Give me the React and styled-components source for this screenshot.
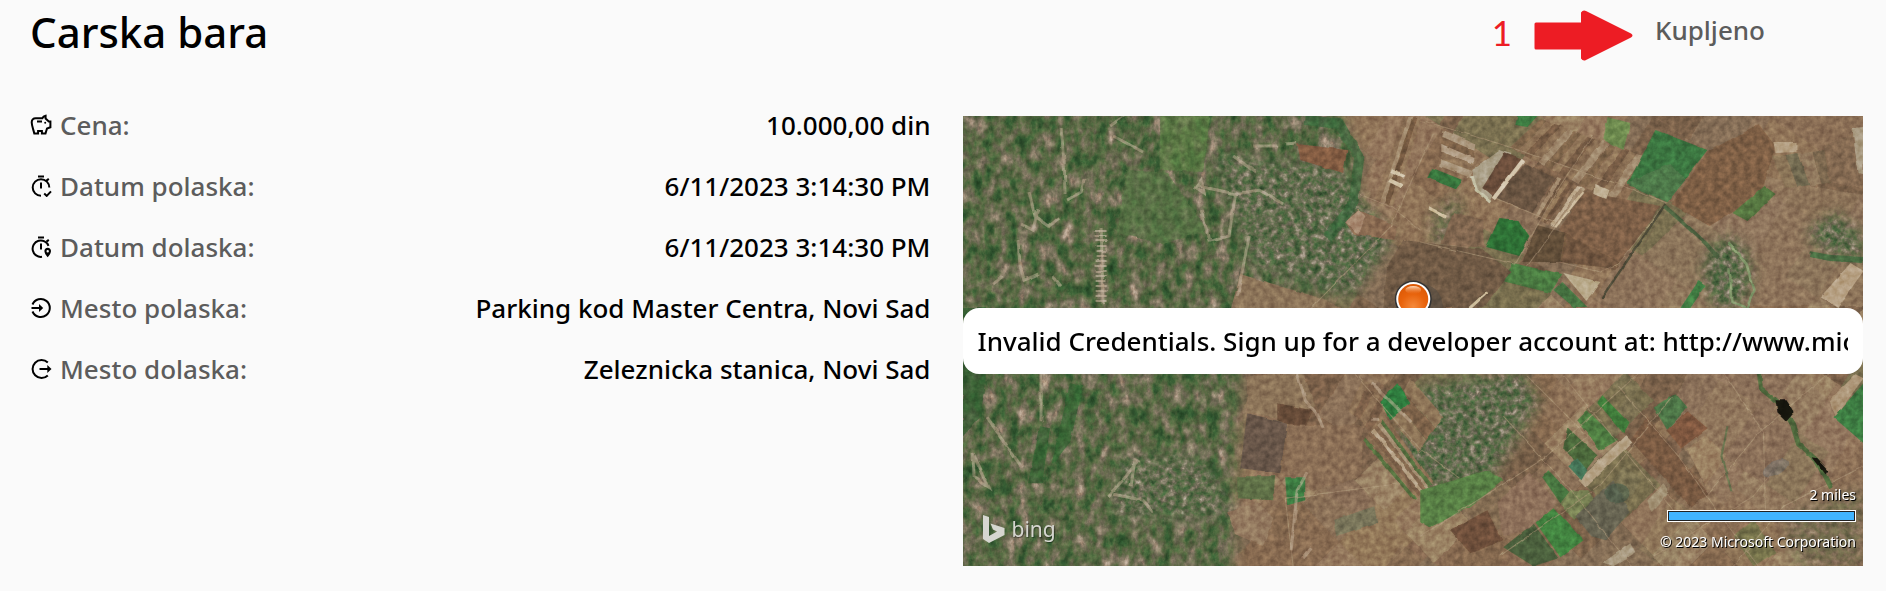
import React from 'react';
import styled, { createGlobalStyle } from 'styled-components';

const GlobalStyle = createGlobalStyle`
  *, *::before, *::after { box-sizing: border-box; }
  body {
    margin: 0;
    background: #fafafa;
    color: #000;
    font-family: 'Segoe UI', 'Noto Sans', 'Open Sans', sans-serif;
  }
`;

const Page = styled.main`
  display: grid;
  grid-template-columns: repeat(2, minmax(0, 1fr));
  column-gap: 32px;
  padding: 0 23px 24px 30px;
`;

const Header = styled.header`
  grid-column: 1 / -1;
  display: flex;
  justify-content: space-between;
  align-items: flex-start;
  height: 94px;
`;

const Title = styled.h1`
  margin: 0;
  font-size: 42px;
  font-weight: 500;
  line-height: 64px;
`;

const Status = styled.div`
  display: flex;
  align-items: center;
  gap: 22px;
  height: 60px;
  padding: 4px 98px 0 0;
`;

const StepNumber = styled.span`
  color: #ed1c24;
  font-family: Lato, sans-serif;
  font-size: 35px;
  line-height: 40px;
`;

const Arrow = styled.svg`
  width: 99px;
  height: 51px;
  margin-top: 6px;
`;

const StatusLabel = styled.span`
  color: #5c5c5c;
  font-size: 26px;
  font-weight: 500;
  line-height: 36px;
  margin-bottom: 4px;
`;

const Details = styled.dl`
  margin: 0;
`;

const DetailRow = styled.div`
  display: flex;
  align-items: center;
  justify-content: space-between;
  height: 61px;
  font-size: 26px;
  font-weight: 500;
  line-height: 36px;
`;

const DetailLabel = styled.dt`
  display: flex;
  align-items: center;
  gap: 8px;
  color: #5c5c5c;
`;

const DetailIcon = styled.svg`
  width: 22px;
  height: 22px;
  color: #000;
  fill: none;
  stroke: currentColor;
  stroke-width: 2;
`;

const DetailValue = styled.dd`
  margin: 0;
  text-align: right;
`;

const MapPanel = styled.section`
  display: grid;
  aspect-ratio: 2 / 1;
  margin-top: 22px;
  overflow: hidden;

  & > * {
    grid-area: 1 / 1;
    min-width: 0;
    min-height: 0;
  }
`;

const Terrain = styled.svg`
  display: block;
  width: 100%;
  height: 100%;
`;

const MapFooter = styled.div`
  position: relative;
  display: flex;
  justify-content: space-between;
  align-items: flex-end;
  padding: 0 7px 14px 20px;
`;

const Brand = styled.div`
  display: flex;
  align-items: center;
  gap: 7px;
  margin-bottom: 7px;
  color: #d6d6d0;
  font-size: 21px;
  line-height: 32px;
  text-shadow: 1px 1px 1px #0006;
`;

const BrandMark = styled.svg`
  width: 22px;
  height: 28px;
`;

const Legend = styled.div`
  display: flex;
  flex-direction: column;
  align-items: flex-end;
  color: #fff;
  font-size: 14px;
  line-height: 20px;
  text-shadow: 1px 1px 0 #000;
`;

const ScaleBar = styled.div`
  width: 189px;
  height: 12px;
  margin: 5px 0 10px;
  border: 1px solid #fff;
  background: #41b4ff;
  box-shadow: inset 0 0 0 1px #222;
`;

const Notice = styled.p`
  position: relative;
  align-self: center;
  margin: 0;
  padding: 15px;
  border-radius: 16px;
  background: #fff;
  font-size: 26px;
  font-weight: 500;
  line-height: 36px;
`;

const NoticeText = styled.span`
  display: block;
  overflow: hidden;
  white-space: nowrap;
`;

const icons = {
  savings: (
    <>
      <path d="M5.2 4.2C2.6 4.2 1.2 6 1.2 8.2c0 3.600 1.600 7 2.600 11.200h3.800v-2.300h3.800v2.300h3.600l1.500-4.900 3.400-1.300V7.600h-1.600l-3.200-3V1.700c-1.600.3-2.600 1.100-3.300 2.500Z" />
      <path d="M6.500 7.500h5" />
      <circle cx="14.700" cy="8.800" r="1" fill="currentColor" stroke="none" />
    </>
  ),
  timerCheck: (
    <>
      <path d="M7.500 1.600h6M10.500 7.500v6M10.500 20.800a8.300 8.300 0 1 1 8.300-8.300M16 5.600l2.300-1.700M13.700 18.500l2.500 2.400 4.300-4.500" />
    </>
  ),
  timerPin: (
    <>
      <path d="M7.500 1.600h6M10.500 7.500v6M16 5.600l2.300-1.700M18 9.800A8.200 8.200 0 1 0 11.500 20.800" />
      <path
        d="M17.200 11.700c-2 0-3.300 1.500-3.300 3.300 0 2.700 3.300 6.300 3.300 6.300s3.300-3.600 3.300-6.300c0-1.800-1.400-3.300-3.300-3.300Zm0 2.300a1.200 1.200 0 1 1 0 2.400 1.200 1.200 0 0 1 0-2.400Z"
        fill="currentColor" stroke="none" fillRule="evenodd"
      />
    </>
  ),
  enter: (
    <>
      <path d="M2 7.500a9 9 0 1 1 0 7M1 11h9" />
      <path d="M8.500 7l4.200 4-4.200 4Z" fill="currentColor" stroke="none" />
    </>
  ),
  exit: (
    <>
      <path d="M17.300 4.500a9 9 0 1 0 0 13M9 11h10" />
      <path d="M16.800 7l4.200 4-4.200 4Z" fill="currentColor" stroke="none" />
    </>
  ),
};

const details = [
  { icon: 'savings', label: 'Cena:', value: '10.000,00 din' },
  { icon: 'timerCheck', label: 'Datum polaska:', value: '6/11/2023 3:14:30 PM' },
  { icon: 'timerPin', label: 'Datum dolaska:', value: '6/11/2023 3:14:30 PM' },
  { icon: 'enter', label: 'Mesto polaska:', value: 'Parking kod Master Centra, Novi Sad' },
  { icon: 'exit', label: 'Mesto dolaska:', value: 'Zeleznicka stanica, Novi Sad' },
];

// Deterministic pseudo-random sequence, so that the terrain is the same on every render.
function sequence(seed) {
  let s = seed;
  return () => {
    s = (s * 16807) % 2147483647;
    return s / 2147483647;
  };
}

const soil = ['#8b7158', '#7a5f48', '#95795e', '#876a51', '#927759', '#775f49', '#9d8567', '#836d55', '#76704f'];

function patchwork(seed, cols, rows, w, h) {
  const next = sequence(seed);
  const cells = [];
  for (let r = 0; r < rows; r += 1) {
    let x = -next() * w;
    while (x < cols * w) {
      const cw = w * (0.3 + next() * 1.1);
      cells.push({ x, y: r * h, w: cw, h: h, fill: soil[Math.floor(next() * soil.length)] });
      x += cw;
    }
  }
  return cells;
}

const upperFields = patchwork(71, 16, 10, 38, 62);
const lowerFields = patchwork(929, 14, 10, 44, 54);

// Splits a four-cornered field into strips that run from side a-b to side d-c.
function strips([a, b, c, d], count, colours) {
  const mix = (p, q, t) => [p[0] + (q[0] - p[0]) * t, p[1] + (q[1] - p[1]) * t];
  return Array.from({ length: count }, (_, i) => {
    const t = i / count;
    const u = (i + 1) / count;
    return {
      points: [mix(a, b, t), mix(a, b, u), mix(d, c, u), mix(d, c, t)].map((p) => p.map(Math.round).join()).join(' '),
      fill: colours[i % colours.length],
    };
  });
}

const ploughed = [
  ...strips([[480, 14], [476, 50], [508, 62], [512, 28]], 5, ['#aa967b', '#7e6349', '#b4a088', '#8b7054']),
  ...strips([[577, 3], [680, 40], [650, 86], [546, 32]], 15, ['#80664c', '#907459', '#775c45', '#8b7054', '#a18a6e']),
  ...strips([[594, 61], [622, 73], [593, 112], [571, 102]], 7, ['#a48c70', '#785d45', '#927658', '#735942', '#836850', '#c0ad91']),
  ...strips([[400, 262], [432, 286], [412, 320], [385, 294]], 5, ['#8b7054', '#7c6049']),
  ...strips([[427, 300], [447, 262], [480, 300], [455, 336]], 3, ['#8e7559', '#7d6249']),
  ...strips([[400, 324], [422, 300], [470, 366], [450, 384]], 8, ['#56713f', '#8a6e53', '#7b6048', '#b7a286', '#85694f', '#a89276']),
  ...strips([[808, 40], [862, 34], [870, 66], [822, 72]], 4, ['#8b7558', '#70684f', '#927a5e', '#7b684f']),
  ...strips([[440, 0], [458, 2], [430, 90], [412, 84]], 4, ['#8b6f54', '#a48d70', '#73583f', '#907458']),
];

const parcels = [
  ['692,14 744,34 704,86 664,68', '#3b743f'],
  ['672,62 708,48 722,64 704,86 664,68', '#4d784a'],
  ['469,52 499,64 492,73 464,62', '#37743d'],
  ['536,102 554,104 566,121 556,140 523,131', '#2f7036'],
  ['550,147 599,158 587,177 539,165', '#4b7c42'],
  ['599,166 624,191 610,191 590,174', '#477442'],
  ['600,157 637,166 623,185', '#b9aa8b'],
  ['537,34 509,54 512,74 527,84 548,38', '#aa9f87'],
  ['541,37 560,44 530,81 519,72', '#6b4e3b'],
  ['562,47 592,62 569,97 532,82', '#6b5442'],
  ['574,109 602,117 597,146 559,146', '#614d39'],
  ['602,117 660,141 652,153 597,146', '#71573f'],
  ['622,76 697,90 657,147 595,114', '#7d5f47'],
  ['440,124 520,134 548,156 520,192 420,192 424,150', '#6f5a45'],
  ['490,96 520,104 522,132 478,128', '#80664f'],
  ['644,1 667,7 660,34 640,24', '#6e8b50'],
  ['554,0 574,0 564,11 552,9', '#3d7b42'],
  ['744,36 795,8 812,30 797,80 746,110 708,88', '#7e5f45'],
  ['810,26 834,26 834,36 812,37', '#b5a083'],
  ['889,12 900,11 900,58 894,57', '#ab9d84'],
  ['860,30 888,18 898,72 866,66', '#836951'],
  ['887,147 900,155 874,192 857,181', '#b7a184'],
  ['801,70 812,78 784,105 769,97', '#55753f'],
  ['717,192 735,165 742,170 727,192', '#3f7c43'],
  ['334,28 384,34 380,57 337,44', '#835b43'],
  ['382,106 395,94 434,110 430,124 390,118', '#896a51'],
  ['396,94 402,100 396,118 382,106', '#a98b72'],
  ['277,158 350,180 380,192 268,192', '#8b7359'],
  ['284,260 340,256 352,290 324,304 284,296', '#8b7358'],
  ['284,297 324,307 317,357 277,352', '#67574a'],
  ['314,287 350,294 340,314 314,304', '#664c39'],
  ['324,308 400,310 398,360 350,375 318,358', '#8a6e54'],
  ['274,360 312,360 310,384 274,382', '#5f6f46'],
  ['322,361 342,361 342,384 324,389', '#3e7c43'],
  ['434,267 447,287 427,304 417,286', '#2f7a3d'],
  ['370,404 411,390 414,406 373,420', '#79755a'],
  ['265,396 296,386 310,402 300,430 272,418', '#947a60'],
  ['457,374 524,354 540,364 507,391 467,411 457,405', '#597f45'],
  ['639,279 665,306 660,317 634,286', '#3f7b3a'],
  ['624,294 654,324 637,334 614,304', '#507d42'],
  ['604,311 634,339 620,357 600,331', '#4c683b'],
  ['662,319 669,326 622,371 615,364', '#b4a184'],
  ['712,277 724,291 704,314 690,291', '#4e7446'],
  ['684,301 745,377 727,391 667,324', '#795a43'],
  ['703,314 724,295 744,312 718,332', '#80583f'],
  ['590,391 620,424 597,441 572,406', '#43833f'],
  ['570,407 595,442 570,450 540,431', '#4c603c'],
  ['585,354 607,377 597,387 579,361', '#46753f'],
  ['607,374 624,374 632,386 610,404 597,387', '#778052'],
  ['487,414 524,394 540,424 507,437', '#6e503b'],
  ['534,386 566,356 594,386 566,412 540,420', '#8d705a'],
  ['612,400 650,364 666,396 642,424 628,420', '#666351'],
  ['640,446 667,427 672,437 650,450', '#a99a80'],
  ['684,384 700,367 706,376 688,396', '#a19073'],
  ['605,350 614,342 624,354 618,364', '#47785a'],
  ['900,267 870,301 900,327', '#3e7b42'],
  ['866,284 892,258 900,262 872,300', '#ad9678'],
  ['724,333 742,318 762,340 742,370', '#9c8263'],
  ['770,420 790,404 812,436 790,450', '#76734c'],
];

const groves = [
  ['197,0 247,0 240,56 197,54', '#5a7c44'],
  ['164,54 204,57 244,114 200,128 154,117', '#557344'],
  ['77,310 87,312 79,367 65,367', '#2e6231'],
  ['107,267 120,270 107,326 88,350', '#356a36'],
  ['0,192 30,192 18,300 0,320', '#2f5c2f'],
];

const clearings = [
  'M98 12l3 34 1 32M66 76l6 24 14 10 10-8M58 108l12 6 5-22M147 10l14-10M150 20l30 16M104 84l14-8 3-12M55 124l2 26 4 14 14-6M30 168l10-8M90 160l8 10M138 112l2 76',
  'M232 72l6-8 3 14ZM234 70l20 4 18 4 24-4 24 14M272 80l-6 40-20 4-8-30M290 30l24 0M270 40l22 16M286 120l-12 60M322 28l12-1',
  'M24 301l34 49M10 337l16 34-15-10ZM78 246l0 60M145 380l18-20 12-16M150 378l30 6 10 12M172 342l-4 28',
  'M334 258l8 26 12 14 6 14M344 356l-10 18-6 60M408 266l40 40M340 442l8-10M407 303l8 0',
];

const lanes = [
  'M457 4l80 24 140 48 26 11',
  'M457 126l95 22 44-77 34-52',
  'M532 82l62 26-30 42',
  'M596 146l40 10 20-9 46-60',
  'M396 78l34 14 27 22',
  'M470 18l-16 34-26 58-80 82',
  'M564 260l60 60-22 18',
  'M540 300l68 74 60 76',
  'M457 420l124-78 100-90',
  'M600 260l90 110 50 60',
  'M655 270l60 70 50 70 30 40',
  'M536 440l100-70 74-90',
  'M330 450l-8-68 110-14',
  'M390 256l66 76 40 30',
  'M760 256l40 60 2 80M745 377l50-60 70-60',
  'M770 450l50-60 80-40M690 440l100-60 20-26',
];

function MapTerrain() {
  return (
    <Terrain viewBox="0 0 900 450" preserveAspectRatio="xMidYMid slice" role="img" aria-label="Aerial map">
      <defs>
        <filter id="woods" x="0" y="0" width="100%" height="100%" colorInterpolationFilters="sRGB">
          <feTurbulence type="fractalNoise" baseFrequency="0.09 0.055" numOctaves="5" seed="8" />
          <feColorMatrix values="1 0 0 0 0  1 0 0 0 0  1 0 0 0 0  0 0 0 0 1" />
          <feComponentTransfer result="ground">
            <feFuncR type="table" tableValues=".12 .14 .18 .22 .30 .36 .43 .51 .64 .76 .8" />
            <feFuncG type="table" tableValues=".22 .27 .32 .36 .40 .41 .43 .47 .56 .68 .75" />
            <feFuncB type="table" tableValues=".12 .14 .18 .20 .24 .27 .33 .39 .48 .6 .65" />
          </feComponentTransfer>
          <feComposite in="ground" in2="SourceGraphic" operator="in" />
        </filter>
        <filter id="village" x="0" y="0" width="100%" height="100%" colorInterpolationFilters="sRGB">
          <feTurbulence type="fractalNoise" baseFrequency="0.16" numOctaves="3" seed="21" />
          <feColorMatrix values="1 0 0 0 0  1 0 0 0 0  1 0 0 0 0  0 0 0 0 1" />
          <feComponentTransfer result="ground">
            <feFuncR type="table" tableValues=".14 .17 .22 .26 .32 .38 .45 .54 .66 .75 .8" />
            <feFuncG type="table" tableValues=".26 .28 .33 .38 .41 .42 .45 .51 .61 .70 .8" />
            <feFuncB type="table" tableValues=".14 .16 .20 .23 .26 .30 .36 .43 .54 .64 .7" />
          </feComponentTransfer>
          <feComposite in="ground" in2="SourceGraphic" operator="in" />
        </filter>
        <filter id="grain" x="0" y="0" width="100%" height="100%" colorInterpolationFilters="sRGB">
          <feTurbulence type="fractalNoise" baseFrequency="0.16" numOctaves="3" seed="4" />
          <feColorMatrix values="1.400 0 0 0 -.2  1.400 0 0 0 -.2  1.400 0 0 0 -.2  0 0 0 0 1" />
        </filter>
        <filter id="rough" x="-5%" y="-5%" width="110%" height="110%">
          <feTurbulence type="fractalNoise" baseFrequency="0.07" numOctaves="2" seed="3" />
          <feDisplacementMap in="SourceGraphic" scale="3" xChannelSelector="R" yChannelSelector="G" />
          <feGaussianBlur stdDeviation="0.6" />
        </filter>
        <filter id="feather" x="-10%" y="-10%" width="120%" height="120%">
          <feGaussianBlur stdDeviation="7" />
        </filter>
        <mask id="westArea" maskUnits="userSpaceOnUse" x="0" y="0" width="900" height="450">
          <path d="M-20-20H372L396 50 388 100 424 126 380 180 280 180 270 470H-20Z" fill="#fff" filter="url(#feather)" />
        </mask>
        <mask id="villageArea" maskUnits="userSpaceOnUse" x="0" y="0" width="900" height="450">
          <g fill="#fff" filter="url(#feather)">
            <path d="M250 40l120 10 60 70-40 60-100-30Z" />
            <path d="M457 270l100-15 20 30-50 80-60 10-40-34Z" />
            <ellipse cx="764" cy="158" rx="24" ry="36" />
            <path d="M842 116l30-20 28 24v24l-36-6Z" />
            <path d="M160 340l80 0 30 60-120 0Z" />
            <path d="M466 100l30-25 4 40-30 20Z" opacity=".6" />
            <path d="M820 400l80-30v80h-70Z" opacity=".4" />
          </g>
        </mask>
        <radialGradient id="pinFill" cx="50%" cy="75%" r="70%">
          <stop offset="0" stopColor="#f58a3c" />
          <stop offset=".6" stopColor="#e8630c" />
          <stop offset="1" stopColor="#dd5a06" />
        </radialGradient>
        <linearGradient id="pinGloss" x1="0" y1="0" x2="0" y2="1">
          <stop offset="0" stopColor="#ffd9b8" />
          <stop offset="1" stopColor="#ee8035" stopOpacity="0" />
        </linearGradient>
      </defs>

      <rect width="900" height="450" fill="#8a6e55" />
      <g filter="url(#rough)">
        <g transform="translate(480 -210) rotate(33)" opacity=".8">
          {upperFields.map((f, i) => <rect key={i} x={f.x} y={f.y} width={f.w} height={f.h} fill={f.fill} />)}
        </g>
        <g transform="translate(560 150) rotate(46)" opacity=".8">
          {lowerFields.map((f, i) => <rect key={i} x={f.x} y={f.y} width={f.w} height={f.h} fill={f.fill} />)}
        </g>
        <path d="M800 60l100 20v110H690l-20-40 60-60Z" fill="#8f765c" opacity=".8" />
        <path d="M730 250h100l60 60-40 90-90-10-60-90Z" fill="#92785e" opacity=".7" />
      </g>

      <g mask="url(#westArea)"><rect width="900" height="450" filter="url(#woods)" /></g>
      <g mask="url(#villageArea)"><rect width="900" height="450" filter="url(#village)" /></g>

      <g filter="url(#rough)">
        <g opacity=".7">
          {groves.map(([points, fill]) => <polygon key={points} points={points} fill={fill} />)}
        </g>
        {ploughed.map((s, i) => <polygon key={i} points={s.points} fill={s.fill} />)}
        {parcels.map(([points, fill]) => <polygon key={points} points={points} fill={fill} />)}
        <g fill="none" stroke="#b09a7c" strokeWidth="1" opacity=".6">
          {lanes.map((d) => <path key={d} d={d} />)}
        </g>
        <g fill="none" stroke="#cbb89f" strokeWidth="3" opacity=".5">
          {clearings.map((d) => <path key={d} d={d} />)}
        </g>
        <path d="M138 114v74" stroke="#c9b8a4" strokeWidth="11" strokeDasharray="2 3" fill="none" opacity=".6" />
        <path d="M342 4l34 4 20 34-6 46-26 34" fill="none" stroke="#37683a" strokeWidth="10" opacity=".7" />
        <path d="M702 88l-20 30-44 64" fill="none" stroke="#4c4937" strokeWidth="2.500" />
        <path d="M701 90l18 16 24 22 12 14" fill="none" stroke="#4d6341" strokeWidth="4" />
        <path d="M560 44l-30 39" fill="none" stroke="#d5c7ae" strokeWidth="4" />
        <path d="M620 76l-28 35" fill="none" stroke="#cdbb9c" strokeWidth="2" />
        <path d="M509 60l4 14 14 12" fill="none" stroke="#c4c1a5" strokeWidth="3" />
        <path d="M524 176l-22 20M466 92l17 9" fill="none" stroke="#cfbf9e" strokeWidth="3" />
        <path d="M428 55l13 6M426 64l12 6" fill="none" stroke="#d2c4a8" strokeWidth="4" />
        <path d="M632 68l14 6-3 9-12-5Z" fill="#bfae91" />
        <path d="M765 126l18 22 8 26-8 18-14-6-3-34" fill="none" stroke="#82986b" strokeWidth="2.500" />
        <path d="M846 138l22 4 32 2" fill="none" stroke="#496c43" strokeWidth="6" />
        <path d="M794 250l3 22 20 16 12 20 6 20 18 16 14 28" fill="none" stroke="#506a3d" strokeWidth="5" />
        <path d="M764 310l-6 30 10 36" fill="none" stroke="#66724d" strokeWidth="2" />
        <path d="M812 284h11l8 12-8 9-9-9ZM849 341l5 1 11 12-3 4Z" fill="#17160f" />
        <ellipse cx="654" cy="377" rx="12" ry="10" fill="#4f604b" opacity=".7" />
        <ellipse cx="812" cy="352" rx="14" ry="7" transform="rotate(-30 812 352)" fill="#77716a" opacity=".7" />
      </g>

      <rect width="900" height="450" filter="url(#grain)" opacity=".22" style={{ mixBlendMode: 'overlay' }} />

      <path d="M459 168q20 2 21 26h-14Z" fill="#4d4740" opacity=".5" />
      <circle cx="450" cy="183" r="18.500" fill="#333" />
      <circle cx="450" cy="183" r="17" fill="#fff" />
      <circle cx="450" cy="183" r="15" fill="url(#pinFill)" />
      <ellipse cx="450" cy="174" rx="8" ry="4" fill="url(#pinGloss)" />
    </Terrain>
  );
}

export default function App() {
  return (
    <>
      <GlobalStyle />
      <Page>
        <Header>
          <Title>Carska bara</Title>
          <Status>
            <StepNumber>1</StepNumber>
            <Arrow viewBox="0 0 99 51" aria-hidden="true">
              <path
                d="M2 12.500h45V2.500q2-3 5-1.500L97 23.500q3 2 0 4L52 50q-3 1.500-5-1.500v-9H2q-1.500 0-1.500-1.500V14q0-1.500 1.500-1.500Z"
                fill="#ed1c24"
              />
            </Arrow>
            <StatusLabel>Kupljeno</StatusLabel>
          </Status>
        </Header>

        <Details>
          {details.map(({ icon, label, value }) => (
            <DetailRow key={label}>
              <DetailLabel>
                <DetailIcon viewBox="0 0 21 22" aria-hidden="true">{icons[icon]}</DetailIcon>
                {label}
              </DetailLabel>
              <DetailValue>{value}</DetailValue>
            </DetailRow>
          ))}
        </Details>

        <MapPanel>
          <MapTerrain />
          <MapFooter>
            <Brand>
              <BrandMark viewBox="0 0 22 28" aria-hidden="true">
                <path d="M0 0l6 2v19l8-4.500-4-2L7.500 8.500 21.500 13v7L6 28l-6-4Z" fill="#d6d6d0" />
              </BrandMark>
              bing
            </Brand>
            <Legend>
              <span>2 miles</span>
              <ScaleBar />
              <span>© 2023 Microsoft Corporation</span>
            </Legend>
          </MapFooter>
          <Notice>
            <NoticeText>
              Invalid Credentials. Sign up for a developer account at: http://www.microsoft.com/maps/developers
            </NoticeText>
          </Notice>
        </MapPanel>
      </Page>
    </>
  );
}
